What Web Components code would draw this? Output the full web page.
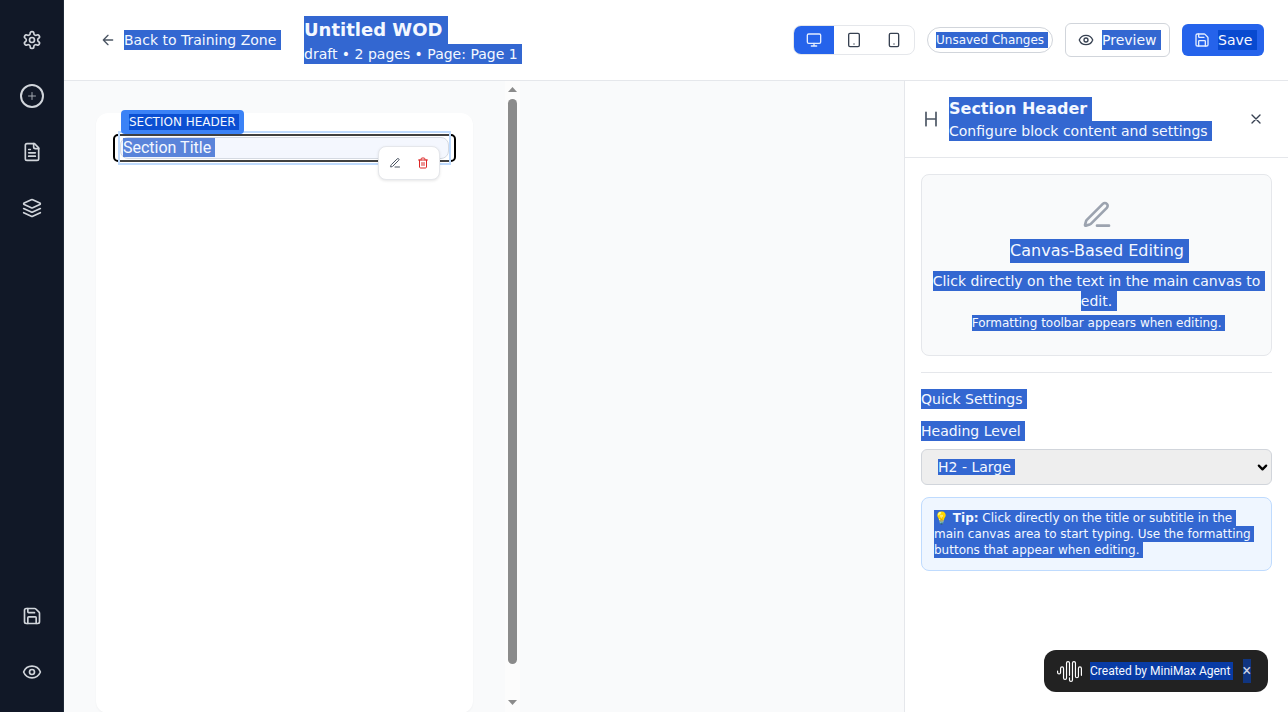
<!DOCTYPE html>
<html lang="en"><head><meta charset="utf-8"><title>Untitled WOD</title>
<style>html,body{margin:0;height:100%;overflow:hidden;background:#fff}body{font-family:"DejaVu Sans",sans-serif}</style></head>
<body><wod-app></wod-app>
<script>
const ICONS={
settings:'<path d="M12.22 2h-.44a2 2 0 0 0-2 2v.18a2 2 0 0 1-1 1.73l-.43.25a2 2 0 0 1-2 0l-.15-.08a2 2 0 0 0-2.73.73l-.22.38a2 2 0 0 0 .73 2.73l.15.1a2 2 0 0 1 1 1.72v.51a2 2 0 0 1-1 1.74l-.15.09a2 2 0 0 0-.73 2.73l.22.38a2 2 0 0 0 2.73.73l.15-.08a2 2 0 0 1 2 0l.43.25a2 2 0 0 1 1 1.73V20a2 2 0 0 0 2 2h.44a2 2 0 0 0 2-2v-.18a2 2 0 0 1 1-1.73l.43-.25a2 2 0 0 1 2 0l.15.08a2 2 0 0 0 2.73-.73l.22-.39a2 2 0 0 0-.73-2.73l-.15-.08a2 2 0 0 1-1-1.74v-.5a2 2 0 0 1 1-1.74l.15-.09a2 2 0 0 0 .73-2.73l-.22-.38a2 2 0 0 0-2.73-.73l-.15.08a2 2 0 0 1-2 0l-.43-.25a2 2 0 0 1-1-1.73V4a2 2 0 0 0-2-2z"/><circle cx="12" cy="12" r="3"/>',
plus:'<path d="M5 12h14M12 5v14"/>',
file:'<path d="M15 2H6a2 2 0 0 0-2 2v16a2 2 0 0 0 2 2h12a2 2 0 0 0 2-2V7Z"/><path d="M14 2v4a2 2 0 0 0 2 2h4M10 9H8M16 13H8M16 17H8"/>',
layers:'<path d="m12.83 2.18a2 2 0 0 0-1.66 0L2.6 6.08a1 1 0 0 0 0 1.83l8.58 3.91a2 2 0 0 0 1.66 0l8.58-3.9a1 1 0 0 0 0-1.83Z"/><path d="m22 17.65-9.17 4.16a2 2 0 0 1-1.66 0L2 17.65"/><path d="m22 12.65-9.17 4.16a2 2 0 0 1-1.66 0L2 12.65"/>',
save:'<path d="M15.2 3a2 2 0 0 1 1.4.6l3.8 3.8a2 2 0 0 1 .6 1.4V19a2 2 0 0 1-2 2H5a2 2 0 0 1-2-2V5a2 2 0 0 1 2-2z"/><path d="M17 21v-7a1 1 0 0 0-1-1H8a1 1 0 0 0-1 1v7M7 3v4a1 1 0 0 0 1 1h7"/>',
eye:'<path d="M2.062 12.348a1 1 0 0 1 0-.696 10.75 10.75 0 0 1 19.876 0 1 1 0 0 1 0 .696 10.75 10.75 0 0 1-19.876 0"/><circle cx="12" cy="12" r="3"/>',
back:'<path d="m12 19-7-7 7-7M19 12H5"/>',
monitor:'<rect width="20" height="14" x="2" y="3" rx="2"/><path d="M8 21h8M12 17v4"/>',
tablet:'<rect width="16" height="20" x="4" y="2" rx="2"/><path d="M12 18h.01"/>',
phone:'<rect width="14" height="20" x="5" y="2" rx="2"/><path d="M12 18h.01"/>',
pen:'<path d="M12 20h9"/><path d="M16.376 3.622a1 1 0 0 1 3.002 3.002L7.368 18.635a2 2 0 0 1-.855.506l-2.872.838a.5.5 0 0 1-.62-.62l.838-2.872a2 2 0 0 1 .506-.854z"/>',
trash:'<path d="M3 6h18M19 6v14c0 1-1 2-2 2H7c-1 0-2-1-2-2V6M8 6V4c0-1 1-2 2-2h4c1 0 2 1 2 2v2M10 11v6M14 11v6"/>',
heading:'<path d="M6 12h12M6 20V4M18 20V4"/>',
close:'<path d="M18 6 6 18M6 6l12 12"/>',
chevron:'<path d="m4 8 8 8 8-8"/>'};
function define(name,html){customElements.define(name,class extends HTMLElement{constructor(){super();const t=document.createElement('template');t.innerHTML=html;this.attachShadow({mode:'open'}).append(t.content.cloneNode(true));}});}
customElements.define('ui-icon',class extends HTMLElement{connectedCallback(){if(this.shadowRoot)return;const s=this.getAttribute('size')||16;
this.attachShadow({mode:'open'}).innerHTML=`<style>:host{display:block;flex:none;width:${s}px;height:${s}px}svg{display:block}</style><svg width="${s}" height="${s}" viewBox="0 0 24 24" fill="none" stroke="currentColor" stroke-width="${this.getAttribute('weight')||2}" stroke-linecap="round" stroke-linejoin="round">${ICONS[this.getAttribute('name')]}</svg>`;}});
define('sel-text','<style>:host{display:block;width:fit-content;white-space:pre;background:var(--sel,#3367d1);color:#f4f8ff;font-size:14px;line-height:20px;padding-right:4.5px}</style><slot></slot>');
define('nav-rail',`<style>:host{display:flex;flex-direction:column;gap:16px;box-sizing:border-box;width:64px;padding:20px 0;background:#111827;border-right:1px solid #1f2937;color:#d1d5db}
div{height:40px;display:grid;place-items:center}.push{margin-top:auto}.ring{width:20px;height:20px;border:2px solid #d1d5db;border-radius:50%;display:grid;place-items:center}.ring ui-icon{color:#a3a8b1}</style>
<div><ui-icon name="settings" size="20"></ui-icon></div><div><span class="ring"><ui-icon name="plus" size="12"></ui-icon></span></div><div><ui-icon name="file" size="20"></ui-icon></div><div><ui-icon name="layers" size="20"></ui-icon></div><div class="push"><ui-icon name="save" size="20"></ui-icon></div><div><ui-icon name="eye" size="20"></ui-icon></div>`);
define('top-bar',`<style>:host{display:flex;align-items:center;box-sizing:border-box;height:81px;padding:0 24px 1px 36px;border-bottom:1px solid #e5e7eb;background:#fff;color:#374151}
.back{display:flex;align-items:center;gap:8px;width:204px;color:#4b5563}.name{margin-right:auto}.name sel-text:first-child{font-size:18px;line-height:28px;font-weight:700;padding-right:6px}.name sel-text:last-child{padding-right:4px}
.devices{display:flex;border:1px solid #e5e7eb;border-radius:8px;overflow:hidden;margin-right:12px}.devices span{width:40px;height:28px;display:grid;place-items:center}.devices .on{background:#2563eb;color:#e4edff}
.pill{border:1px solid #d1d5db;border-radius:99px;box-sizing:border-box;width:126px;height:26px;padding:4px 8px;margin-right:12px}.pill sel-text{font-size:12px;line-height:16px;padding-right:3.5px}
.btn{display:flex;align-items:center;box-sizing:border-box;gap:8px;height:34px;width:105px;border:1px solid #d1d5db;border-radius:6px;padding:0 12px;margin-right:12px}.save{width:82px;height:32px;background:#2563eb;border:0;margin:0;color:#e4edff;--sel:#084ad0}</style>
<div class="back"><ui-icon name="back"></ui-icon><sel-text>Back to Training Zone</sel-text></div><div class="name"><sel-text>Untitled WOD</sel-text><sel-text>draft • 2 pages • Page: Page 1</sel-text></div>
<div class="devices"><span class="on"><ui-icon name="monitor"></ui-icon></span><span><ui-icon name="tablet"></ui-icon></span><span><ui-icon name="phone"></ui-icon></span></div>
<div class="pill"><sel-text>Unsaved Changes</sel-text></div><div class="btn"><ui-icon name="eye"></ui-icon><sel-text>Preview</sel-text></div><div class="btn save"><ui-icon name="save"></ui-icon><sel-text>Save</sel-text></div>`);
define('section-block',`<style>:host{display:block;position:relative;margin:21px 17px;height:28px;box-sizing:border-box}
.focus{position:absolute;inset:0;border:2px solid #000;border-radius:5px}.veil{position:absolute;left:5px;top:-3px;width:329px;height:30px;border:2px solid #bfdbfe;background:#ffffff40}
.field{position:absolute;left:7px;top:3px;width:329px;height:22px;box-sizing:border-box;background:#f4f7fe;border:1px solid #d5dae2;border-radius:8px;padding:0 2px}
.field sel-text{font-family:Roboto,sans-serif;font-size:16px;line-height:19px;padding-right:4px;--sel:#5a84da}
.tag{position:absolute;left:8px;top:-24px;height:24px;width:123px;box-sizing:border-box;background:#3b82f6;border-radius:4px;padding:4px 8px;--sel:#0b4fd2}.tag sel-text{font-size:12px;line-height:16px;padding-right:3.5px}
.tools{position:absolute;left:265px;top:12px;width:60px;height:32px;display:flex;align-items:center;justify-content:center;gap:16px;border:1px solid #e5e7eb;border-radius:8px;background:#fff;color:#4b5563;box-shadow:0 1px 3px #0000001a}.red{color:#dc2626}</style>
<div class="focus"></div><div class="veil"></div><div class="field"><sel-text>Section Title</sel-text></div><div class="tag"><sel-text>SECTION HEADER</sel-text></div><div class="tools"><ui-icon name="pen" size="12"></ui-icon><ui-icon class="red" name="trash" size="12"></ui-icon></div>`);
define('scroll-track',`<style>:host{display:flex;flex-direction:column;align-items:center;box-sizing:border-box;width:15px;height:100%;padding:6px 0;background:#fcfcfc}i{width:9px;height:5px;background:#8b8b8b;clip-path:polygon(50% 0,100% 100%,0 100%)}i:last-child{transform:scaleY(-1);margin-top:auto;margin-bottom:1px}b{margin-top:7px;width:9px;height:565px;border-radius:5px;background:#8b8b8b}</style><i></i><b></b><i></i>`);
define('wod-canvas',`<style>:host{display:flex;background:#f9fafb}.page{width:377px;height:600px;margin:32px 32px 0;background:#fff;border-radius:12px;display:flow-root;box-shadow:0 1px 2px #0000000a}</style><div class="page"><section-block></section-block></div><scroll-track></scroll-track>`);
define('settings-panel',`<style>:host{display:block;box-sizing:border-box;border-left:1px solid #e5e7eb;background:#fff;color:#4b5563}
header{display:flex;align-items:center;gap:8px;height:76px;padding:0 24px 0 16px;border-bottom:1px solid #e5e7eb}header ui-icon:last-child{margin-left:auto;color:#374151}.t{font-size:16px;line-height:24px;font-weight:700;padding-right:5px}
main{padding:16px}.card{display:flex;flex-direction:column;align-items:center;box-sizing:border-box;height:182px;padding-top:24px;border:1px solid #e5e7eb;border-radius:8px;background:#f9fafb;color:#9ca3af}.card sel-text{margin-right:-4.5px}.card .h{font-size:16px;line-height:24px;margin:8px -6px 8px 0;padding-right:5px}.card .s{font-size:12px;line-height:16px;margin:4px -3.8px 0 0;padding-right:3.5px}
hr{height:1px;border:0;background:#e5e7eb;margin:16px 0}.label{margin-top:12px}.select{margin:8px 0 12px;height:36px;box-sizing:border-box;border:1px solid #d1d5db;border-radius:6px;background:#eee;display:flex;align-items:center;justify-content:space-between;padding:0 3px 0 16px;color:#000}.select sel-text{line-height:16px}
.tip{box-sizing:border-box;height:74px;padding:12px;border:1px solid #bfdbfe;border-radius:8px;background:#eff6ff}.tip sel-text{font-size:12px;line-height:16px;height:16px;padding-right:3.5px}</style>
<header><ui-icon name="heading" size="20" weight="2"></ui-icon><div><sel-text class="t">Section Header</sel-text><sel-text>Configure block content and settings</sel-text></div><ui-icon name="close"></ui-icon></header>
<main><div class="card"><ui-icon name="pen" size="32"></ui-icon><sel-text class="h">Canvas-Based Editing</sel-text><sel-text>Click directly on the text in the main canvas to</sel-text><sel-text>edit.</sel-text><sel-text class="s">Formatting toolbar appears when editing.</sel-text></div><hr>
<sel-text>Quick Settings</sel-text><sel-text class="label">Heading Level</sel-text><div class="select"><sel-text>H2 - Large</sel-text><ui-icon name="chevron" size="11" weight="5"></ui-icon></div>
<div class="tip"><sel-text>💡 <b>Tip:</b> Click directly on the title or subtitle in the</sel-text><sel-text>main canvas area to start typing. Use the formatting</sel-text><sel-text>buttons that appear when editing.</sel-text></div></main>`);
define('agent-badge',`<style>:host{position:absolute;right:20px;bottom:20px;display:flex;align-items:center;box-sizing:border-box;width:224px;height:42px;padding:0 17px 0 13px;border-radius:12px;background:#222;color:#fff}svg{display:block;flex:none}sel-text{font-family:Roboto,sans-serif;font-size:12px;line-height:18px;margin-left:8px;padding-right:3px;font-weight:400;--sel:#083ba5}.x{margin-left:auto;width:8px;padding:0;line-height:24px;font-size:16px;text-indent:-.5px;color:#ccd4e5;--sel:#103580}</style>
<svg width="25" height="25" viewBox="0 0 24 24" fill="#fff"><path d="M11.43 3.92a.86.86 0 1 0-1.718 0v14.236a1.999 1.999 0 0 1-3.997 0V9.022a.86.86 0 1 0-1.718 0v3.87a1.999 1.999 0 0 1-3.997 0V11.49a.57.57 0 0 1 1.139 0v1.404a.86.86 0 0 0 1.719 0V9.022a1.999 1.999 0 0 1 3.997 0v9.134a.86.86 0 0 0 1.719 0V3.92a1.998 1.998 0 1 1 3.996 0v11.788a.57.57 0 1 1-1.139 0zm10.572 3.105a2 2 0 0 0-1.999 1.997v7.63a.86.86 0 0 1-1.718 0V3.923a1.999 1.999 0 0 0-3.997 0v16.16a.86.86 0 0 1-1.719 0V18.08a.57.57 0 1 0-1.138 0v2a1.998 1.998 0 0 0 3.996 0V3.92a.86.86 0 0 1 1.719 0v12.73a1.999 1.999 0 0 0 3.996 0V9.023a.86.86 0 1 1 1.72 0v6.686a.57.57 0 0 0 1.138 0V9.022a2 2 0 0 0-1.998-1.997"/></svg><sel-text>Created by MiniMax Agent</sel-text><sel-text class="x">×</sel-text>`);
define('wod-app',`<style>:host{display:grid;position:relative;width:1288px;height:712px;overflow:hidden;grid-template:81px 631px/64px 840px 384px}nav-rail{grid-row:1/3}top-bar{grid-column:2/4}</style><nav-rail></nav-rail><top-bar></top-bar><wod-canvas></wod-canvas><settings-panel></settings-panel><agent-badge></agent-badge>`);
</script></body></html>
